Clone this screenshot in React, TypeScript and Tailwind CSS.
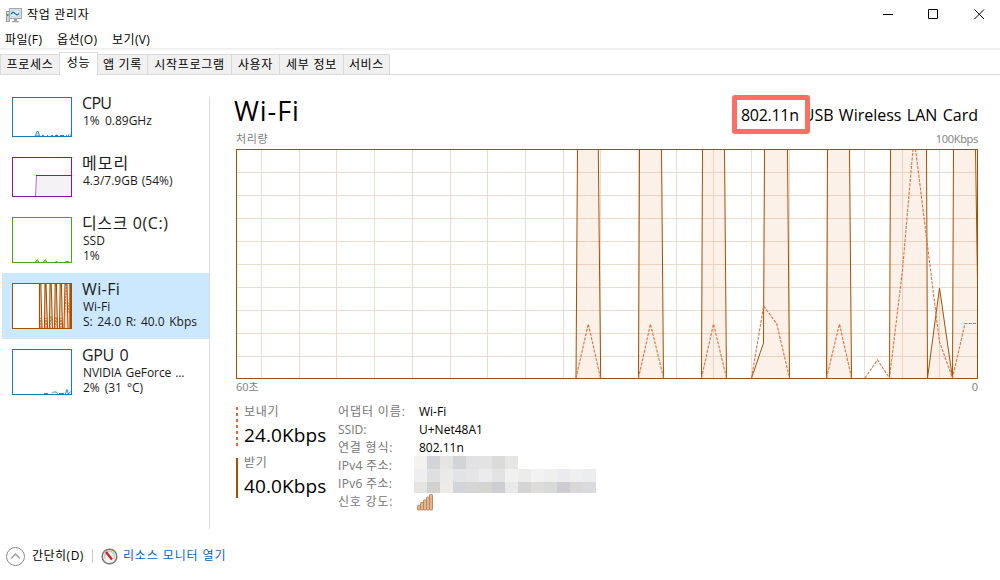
import { clsx } from "clsx";

type Item = {
  id: string;
  title: string;
  lines: string[];
  titleClass: string;
  lineClasses: string[];
  active?: boolean;
};

const tabs = [
  { label: "프로세스", width: "w-[59px]" },
  { label: "성능", width: "w-[39px]" },
  { label: "앱 기록", width: "w-[50px]" },
  { label: "시작프로그램", width: "w-[84px]" },
  { label: "사용자", width: "w-[48px]" },
  { label: "세부 정보", width: "w-[64px]" },
  { label: "서비스", width: "w-[46px]" },
];

const items: Item[] = [
  { id: "cpu", title: "CPU", lines: ["1% 0.89GHz"], titleClass: "tracking-[-0.7px]", lineClasses: ["[word-spacing:2px]"] },
  { id: "memory", title: "메모리", lines: ["4.3/7.9GB (54%)"], titleClass: "tracking-[1px]", lineClasses: ["[word-spacing:1px]"] },
  { id: "disk", title: "디스크 0(C:)", lines: ["SSD", "1%"], titleClass: "tracking-[0.6px]", lineClasses: ["tracking-normal", "tracking-normal"] },
  { id: "wifi", title: "Wi-Fi", lines: ["Wi-Fi", "S: 24.0 R: 40.0 Kbps"], titleClass: "tracking-[0.4px]", lineClasses: ["tracking-normal", "[word-spacing:1.5px]"], active: true },
  { id: "gpu", title: "GPU 0", lines: ["NVIDIA GeForce ...", "2% (31 °C)"], titleClass: "tracking-[-0.4px] [word-spacing:2px]", lineClasses: ["tracking-[-0.1px] [word-spacing:1px]", "[word-spacing:1.8px]"] },
];

const gridX = [25, 63, 100, 138, 176, 214, 251, 289, 327, 364, 402, 440, 477, 515, 553, 591, 628, 666, 703];
const gridY = [23, 46, 69, 92, 115, 138, 161, 184, 207];

const received = [
  "340,229 341.5,0 362.3,0 364.7,229",
  "402.5,229 403.5,0 425.5,0 427.5,229",
  "465.5,229 466.5,0 488.5,0 490.5,229",
  "515.5,229 527.5,194 528.5,0 551.5,0 553.5,229",
  "590.5,229 591.5,0 613.5,0 615.5,229",
  "653.5,229 654.5,0 690.5,0 691.5,229 703.5,139 716.5,229 717.5,0 739.5,0 741.5,132",
];

const sent = [
  "340,229 352.3,175 364.5,229",
  "402.5,229 414.5,175 427.5,229",
  "465.5,229 477.5,175 490.5,229",
  "515.5,229 527.7,157 540.8,175 553.5,229",
  "590.5,229 603.5,175 615.5,229",
  "629,229 641.5,211 653.5,229 666.5,121 677,0",
  "679.5,0 690.8,91 703.5,193 716.5,229 729,174.5 741,174.5",
];

const mosaic = [
  ["#f3f2ee", "#d2d4d7", "#e6e5e3", "#d3d4d9", "#e2e2e2", "#e3e3e4", "#dbdbd9", "#e6e6e5"],
  ["#eeeeee", "#dedfe0", "#ebeae8", "#e1e3e7", "#e5e5e6", "#ebebed", "#e3e3e3", "#f1f1f1", "#ececeb", "#f2f2f2", "#efefed", "#ebebef", "#efefef", "#ecedee"],
  ["#e5e4e2", "#cfd2d1", "#eeeae6", "#d2d4da", "#d5d5d5", "#d4d4d1", "#cecdd1", "#e8eae9", "#d4d4d5", "#dddcda", "#d7dad6", "#cecbd2", "#dad8d6", "#dadbde"],
];

function AppIcon() {
  return (
    <svg width="16" height="15" viewBox="0 0 16 15">
      <rect x="0.5" y="3.5" width="3" height="10" fill="#d4d4d4" stroke="#a0a0a0" />
      <rect x="1" y="6" width="1.6" height="2" fill="#35b32c" />
      <rect x="3.5" y="0.5" width="12" height="10" fill="#eeeeee" stroke="#a6a6a6" />
      <rect x="5" y="2" width="9" height="7" fill="#d9f0fc" stroke="#a9bdc8" strokeWidth="0.6" />
      <path d="M5 6l2-2 2 1.500 2 1.500 2-1.500" fill="none" stroke="#1874b8" strokeWidth="1.200" />
      <path d="M8 11h3v2h2v1.300H6V13h2z" fill="#a3a3a3" />
    </svg>
  );
}

function Thumb({ id }: { id: string }) {
  if (id === "cpu") {
    return (
      <svg width="60" height="40" className="shrink-0">
        <rect x="0.5" y="0.5" width="59" height="39" fill="#fff" stroke="#117dbb" />
        <path d="M23.5 39l1.300-4.500h1.400l1.300 4.500z" fill="#cfe5f1" stroke="#117dbb" strokeWidth="0.8" />
        <path d="M30 38.5h2M35 38.5h1M39 38.5h2M43 38.5h3M48 38.500h4M54 38.500h1M56.500 37.500v1.500M44.500 37.500v1.500M58 38h1" fill="none" stroke="#117dbb" strokeWidth="0.9" />
      </svg>
    );
  }
  if (id === "memory") {
    return (
      <svg width="60" height="40" className="shrink-0">
        <rect x="0.5" y="0.5" width="59" height="39" fill="#fff" stroke="#8b12ae" />
        <path d="M23.5 39l1-20.5H59V39z" fill="#f4f2f4" />
        <path d="M23.5 39l1-20.5" stroke="#b56ccc" />
        <path d="M24 18.5h35.5" stroke="#8b12ae" />
      </svg>
    );
  }
  if (id === "disk") {
    return (
      <svg width="60" height="46" className="shrink-0">
        <rect x="0.5" y="0.5" width="59" height="45" fill="#fff" stroke="#4da60c" />
        <path d="M23.5 45l1.7-2.5 1.8 2.5M31.5 45l1.7-2.5 1.8 2.5M43.5 45l.8-1 .8 1M53.5 45l.8-1 .8 1 1-1 .8 1" fill="#a6d285" stroke="#4da60c" strokeWidth="0.8" />
      </svg>
    );
  }
  if (id === "wifi") {
    return (
      <svg width="60" height="46" className="shrink-0">
        <rect width="60" height="46" fill="#fff" />
        <path
          d="M27.5 45V1H28.800L30 45M32.5 45L33 1H34L35.500 45M37.5 45L38 1H39.200L40.5 45M42.500 45L43.200 1H44.400L45.5 45M47.5 45L48.200 1H49.400L50.5 45M52 45L53 1H55L56 45"
          fill="#f6dcc8"
          stroke="#a74f01"
          strokeWidth="1.100"
        />
        <path d="M28 45l1-10 1 10M33 45l1-10 1 10M38 45l1-12 2 12M43 45l1-11 1.5 11M48 45l1-10 1 10M52 45L54.5 2 57 30" fill="none" stroke="#e0632d" strokeWidth="0.9" strokeDasharray="2 1" />
        <path d="M58.5 1v44" stroke="#a74f01" strokeWidth="2.400" />
        <rect x="0.5" y="0.5" width="59" height="45" fill="none" stroke="#a74f01" />
      </svg>
    );
  }
  return (
    <svg width="60" height="46" className="shrink-0">
      <rect x="0.5" y="0.5" width="59" height="45" fill="#fff" stroke="#117dbb" />
      <path d="M32 44.5h4M40 44.5l1.5-1.500h3l1 1.500M47 44.500h5M53.500 45l1.500-4.500 1.500 4.500M57 44.500l1.500-2" fill="none" stroke="#117dbb" strokeWidth="0.9" />
    </svg>
  );
}

function ResourceItem({ item }: { item: Item }) {
  return (
    <div
      className={clsx(
        "ml-[2px] flex pl-[10px] pt-[10px]",
        item.lines.length > 1 ? "h-[66px]" : "h-[60px]",
        item.active && "bg-[#cce8ff]",
      )}
    >
      <Thumb id={item.id} />
      <div className="-mt-[4px] ml-[10px] whitespace-nowrap text-[#1a1a1a]">
        <div className={clsx("h-[20px] text-[16px] leading-[20px]", item.titleClass)}>{item.title}</div>
        {item.lines.map((line, i) => (
          <div key={line} className={clsx("ml-px h-[15px] text-[12px] leading-[15px]", item.lineClasses[i])}>
            {line}
          </div>
        ))}
      </div>
    </div>
  );
}

function ThroughputChart() {
  return (
    <svg width="742" height="230" viewBox="0 0 742 230" className="block">
      <rect width="742" height="230" fill="#fff" />
      {gridX.map((x) => (
        <path key={x} d={`M${x + 0.5} 1V229`} stroke="#ecdcd0" />
      ))}
      {gridY.map((y) => (
        <path key={y} d={`M1 ${y + 0.5}H741`} stroke="#ecdcd0" />
      ))}
      {received.map((points, i) => (
        <polygon
          key={points}
          points={i === received.length - 1 ? `${points} 741.5,229` : points}
          fill="#de8f45"
          fillOpacity="0.12"
        />
      ))}
      {received.map((points) => (
        <polyline key={points} points={points} fill="none" stroke="#a74f01" />
      ))}
      {sent.map((points) => (
        <polyline key={points} points={points} fill="none" stroke="#e0703c" strokeWidth="1.100" strokeDasharray="3 1.300" />
      ))}
      <rect x="0.5" y="0.5" width="741" height="229" fill="none" stroke="#a74f01" />
    </svg>
  );
}

function SignalIcon() {
  return (
    <svg width="17" height="17" viewBox="0 0 17 17">
      {[0, 1, 2, 3, 4].map((i) => (
        <rect
          key={i}
          x={0.5 + i * 3}
          y={11.3 - i * 2.7}
          width="3"
          height={4.7 + i * 2.7}
          rx="0.8"
          fill="#dfb594"
          stroke="#bd8052"
          strokeWidth="0.9"
        />
      ))}
    </svg>
  );
}

function Details() {
  return (
    <div className="flex pt-px text-[12px] leading-[18px] whitespace-nowrap">
      <div className="w-[76px] text-[#767676]">
        <div className="tracking-[0.9px]">어댑터 이름:</div>
        <div className="tracking-normal">SSID:</div>
        <div className="tracking-[0.8px]">연결 형식:</div>
        <div className="tracking-[0.3px]">IPv4 주소:</div>
        <div className="tracking-[0.3px]">IPv6 주소:</div>
        <div className="tracking-[0.8px]">신호 강도:</div>
      </div>
      <div className="w-[184px]">
        <div className="pl-[5px]">Wi-Fi</div>
        <div className="pl-[5px]">U+Net48A1</div>
        <div className="pl-[5px]">802.11n</div>
        <div className="-mt-px h-[37px]">
          {mosaic.map((row, i) => (
            <div key={i} className={clsx("flex", i === 2 ? "h-[11px]" : "h-[13px]")}>
              {row.map((color, j) => (
                <div key={j} className="w-[13px]" style={{ backgroundColor: color }} />
              ))}
            </div>
          ))}
        </div>
        <div className="pt-px pl-[3px]">
          <SignalIcon />
        </div>
      </div>
    </div>
  );
}

export default function App() {
  return (
    <div className="flex h-[580px] w-[1000px] flex-col overflow-hidden bg-white font-['Open_Sans','Noto_Sans_CJK_KR',sans-serif] text-[12px] text-black">
      <header className="flex h-[28px] shrink-0 items-center pt-[2px] pl-[6px]">
        <AppIcon />
        <span className="ml-[5px] tracking-[0.7px]">작업 관리자</span>
        <div className="ml-auto flex items-center">
          <svg width="102" height="12" viewBox="0 0 102 12" fill="none" stroke="#000" className="mr-[15px]">
            <path d="M0 5.500h10" />
            <path d="M45.500 0.500h9v9h-9z" />
            <path d="M91.500 0.500l9.500 9.500M101 0.500l-9.500 9.500" />
          </svg>
        </div>
      </header>

      <nav className="flex h-[22px] shrink-0 border-b-2 border-[#f0f0f0] pl-[5px] leading-[24px] tracking-[0.4px] whitespace-nowrap">
        <span className="w-[52px]">파일(F)</span>
        <span className="w-[55px]">옵션(O)</span>
        <span>보기(V)</span>
      </nav>

      <div className="flex h-[25px] shrink-0 items-end border-b border-[#d9d9d9]">
        {tabs.map((tab, i) => (
          <div
            key={tab.label}
            className={clsx(
              "flex shrink-0 justify-center border-[#d9d9d9] tracking-[0.7px] whitespace-nowrap",
              tab.width,
              i === 1
                ? "-mb-px h-[23px] border-x border-t bg-white leading-[20px]"
                : "h-[20px] border-t border-r bg-[#f0f0f0] leading-[19px]",
              i === 0 && "border-r-0 border-l",
            )}
          >
            {tab.label}
          </div>
        ))}
      </div>

      <main className="flex h-[454px] shrink-0">
        <aside className="flex w-[210px] flex-col">
          <div className="mt-[12px] flex">
            <div className="flex w-[209px] flex-col">
              {items.map((item) => (
                <ResourceItem key={item.id} item={item} />
              ))}
            </div>
            <div className="mt-[10px] h-[432px] w-px bg-[#d9d9d9]" />
          </div>
        </aside>

        <section className="ml-[26px] flex w-[742px] flex-col">
          <div className="flex h-[57px] items-start justify-between pt-[18px] whitespace-nowrap">
            <h1 className="-ml-[2px] text-[27px] leading-[36px] tracking-[0.9px]">Wi-Fi</h1>
            <div className="relative mt-[11px] h-[22px] text-[16px] leading-[22px]">
              <span className="[word-spacing:1.2px]">USB Wireless LAN Card</span>
              <span className="absolute -top-[9px] right-[168px] h-[39px] w-[78px] rounded-[3px] border-[5px] border-[#ff6f61] bg-white pl-[4px] leading-[30px] tracking-[-0.3px]">
                802.11n
              </span>
            </div>
          </div>
          <div className="flex h-[17px] items-start justify-between text-[11px] leading-[14px] text-[#7d7d7d]">
            <span className="tracking-[0.6px]">처리량</span>
            <span className="tracking-[-0.3px]">100Kbps</span>
          </div>
          <ThroughputChart />
          <div className="flex h-[23px] justify-between text-[11px] leading-[16px] text-[#7d7d7d]">
            <span>60초</span>
            <span>0</span>
          </div>
          <div className="flex">
            <div className="flex w-[102px] flex-col whitespace-nowrap">
              <div className="flex h-[51px]">
                <div className="mt-[5px] h-[40px] w-[2px] bg-[repeating-linear-gradient(to_bottom,#de6a34_0_3px,#fff_3px_6px)]" />
                <div className="ml-[6px]">
                  <div className="pt-px leading-[18px] tracking-[0.7px] text-[#767676]">보내기</div>
                  <div className="text-[19px] leading-[29px] tracking-[0.1px]">24.0Kbps</div>
                </div>
              </div>
              <div className="flex h-[51px]">
                <div className="mt-[5px] h-[40px] w-[2px] bg-[#a74f01]" />
                <div className="ml-[6px]">
                  <div className="pt-px leading-[18px] tracking-[0.7px] text-[#767676]">받기</div>
                  <div className="text-[19px] leading-[29px] tracking-[0.1px]">40.0Kbps</div>
                </div>
              </div>
            </div>
            <Details />
          </div>
        </section>
      </main>

      <footer className="flex h-[51px] items-center pt-[3px] pl-[5px] whitespace-nowrap">
        <svg width="21" height="21" viewBox="0 0 21 21" fill="none" stroke="#8a8a8a">
          <circle cx="10.500" cy="10.500" r="9" />
          <path d="M6 12.500l4.500-4.500 4.500 4.500" strokeWidth="1.500" stroke="#a0a0a0" />
        </svg>
        <span className="ml-[6px] tracking-[0.5px]">간단히(D)</span>
        <div className="ml-[8px] h-[14px] w-px bg-[#c8c8c8]" />
        <svg width="17" height="17" viewBox="0 0 17 17" className="ml-[8px]">
          <circle cx="8.500" cy="8.500" r="7.300" fill="#f3f3ef" stroke="#777" strokeWidth="1.500" />
          <path d="M4 10.500a5 5 0 1 1 9 0" fill="none" stroke="#c6c6bd" strokeWidth="1.500" />
          <path d="M5 4l6 7.500" stroke="#d01f1f" strokeWidth="2.200" />
        </svg>
        <span className="ml-[5px] tracking-[0.9px] text-[#0066cc]">리소스 모니터 열기</span>
      </footer>
    </div>
  );
}
